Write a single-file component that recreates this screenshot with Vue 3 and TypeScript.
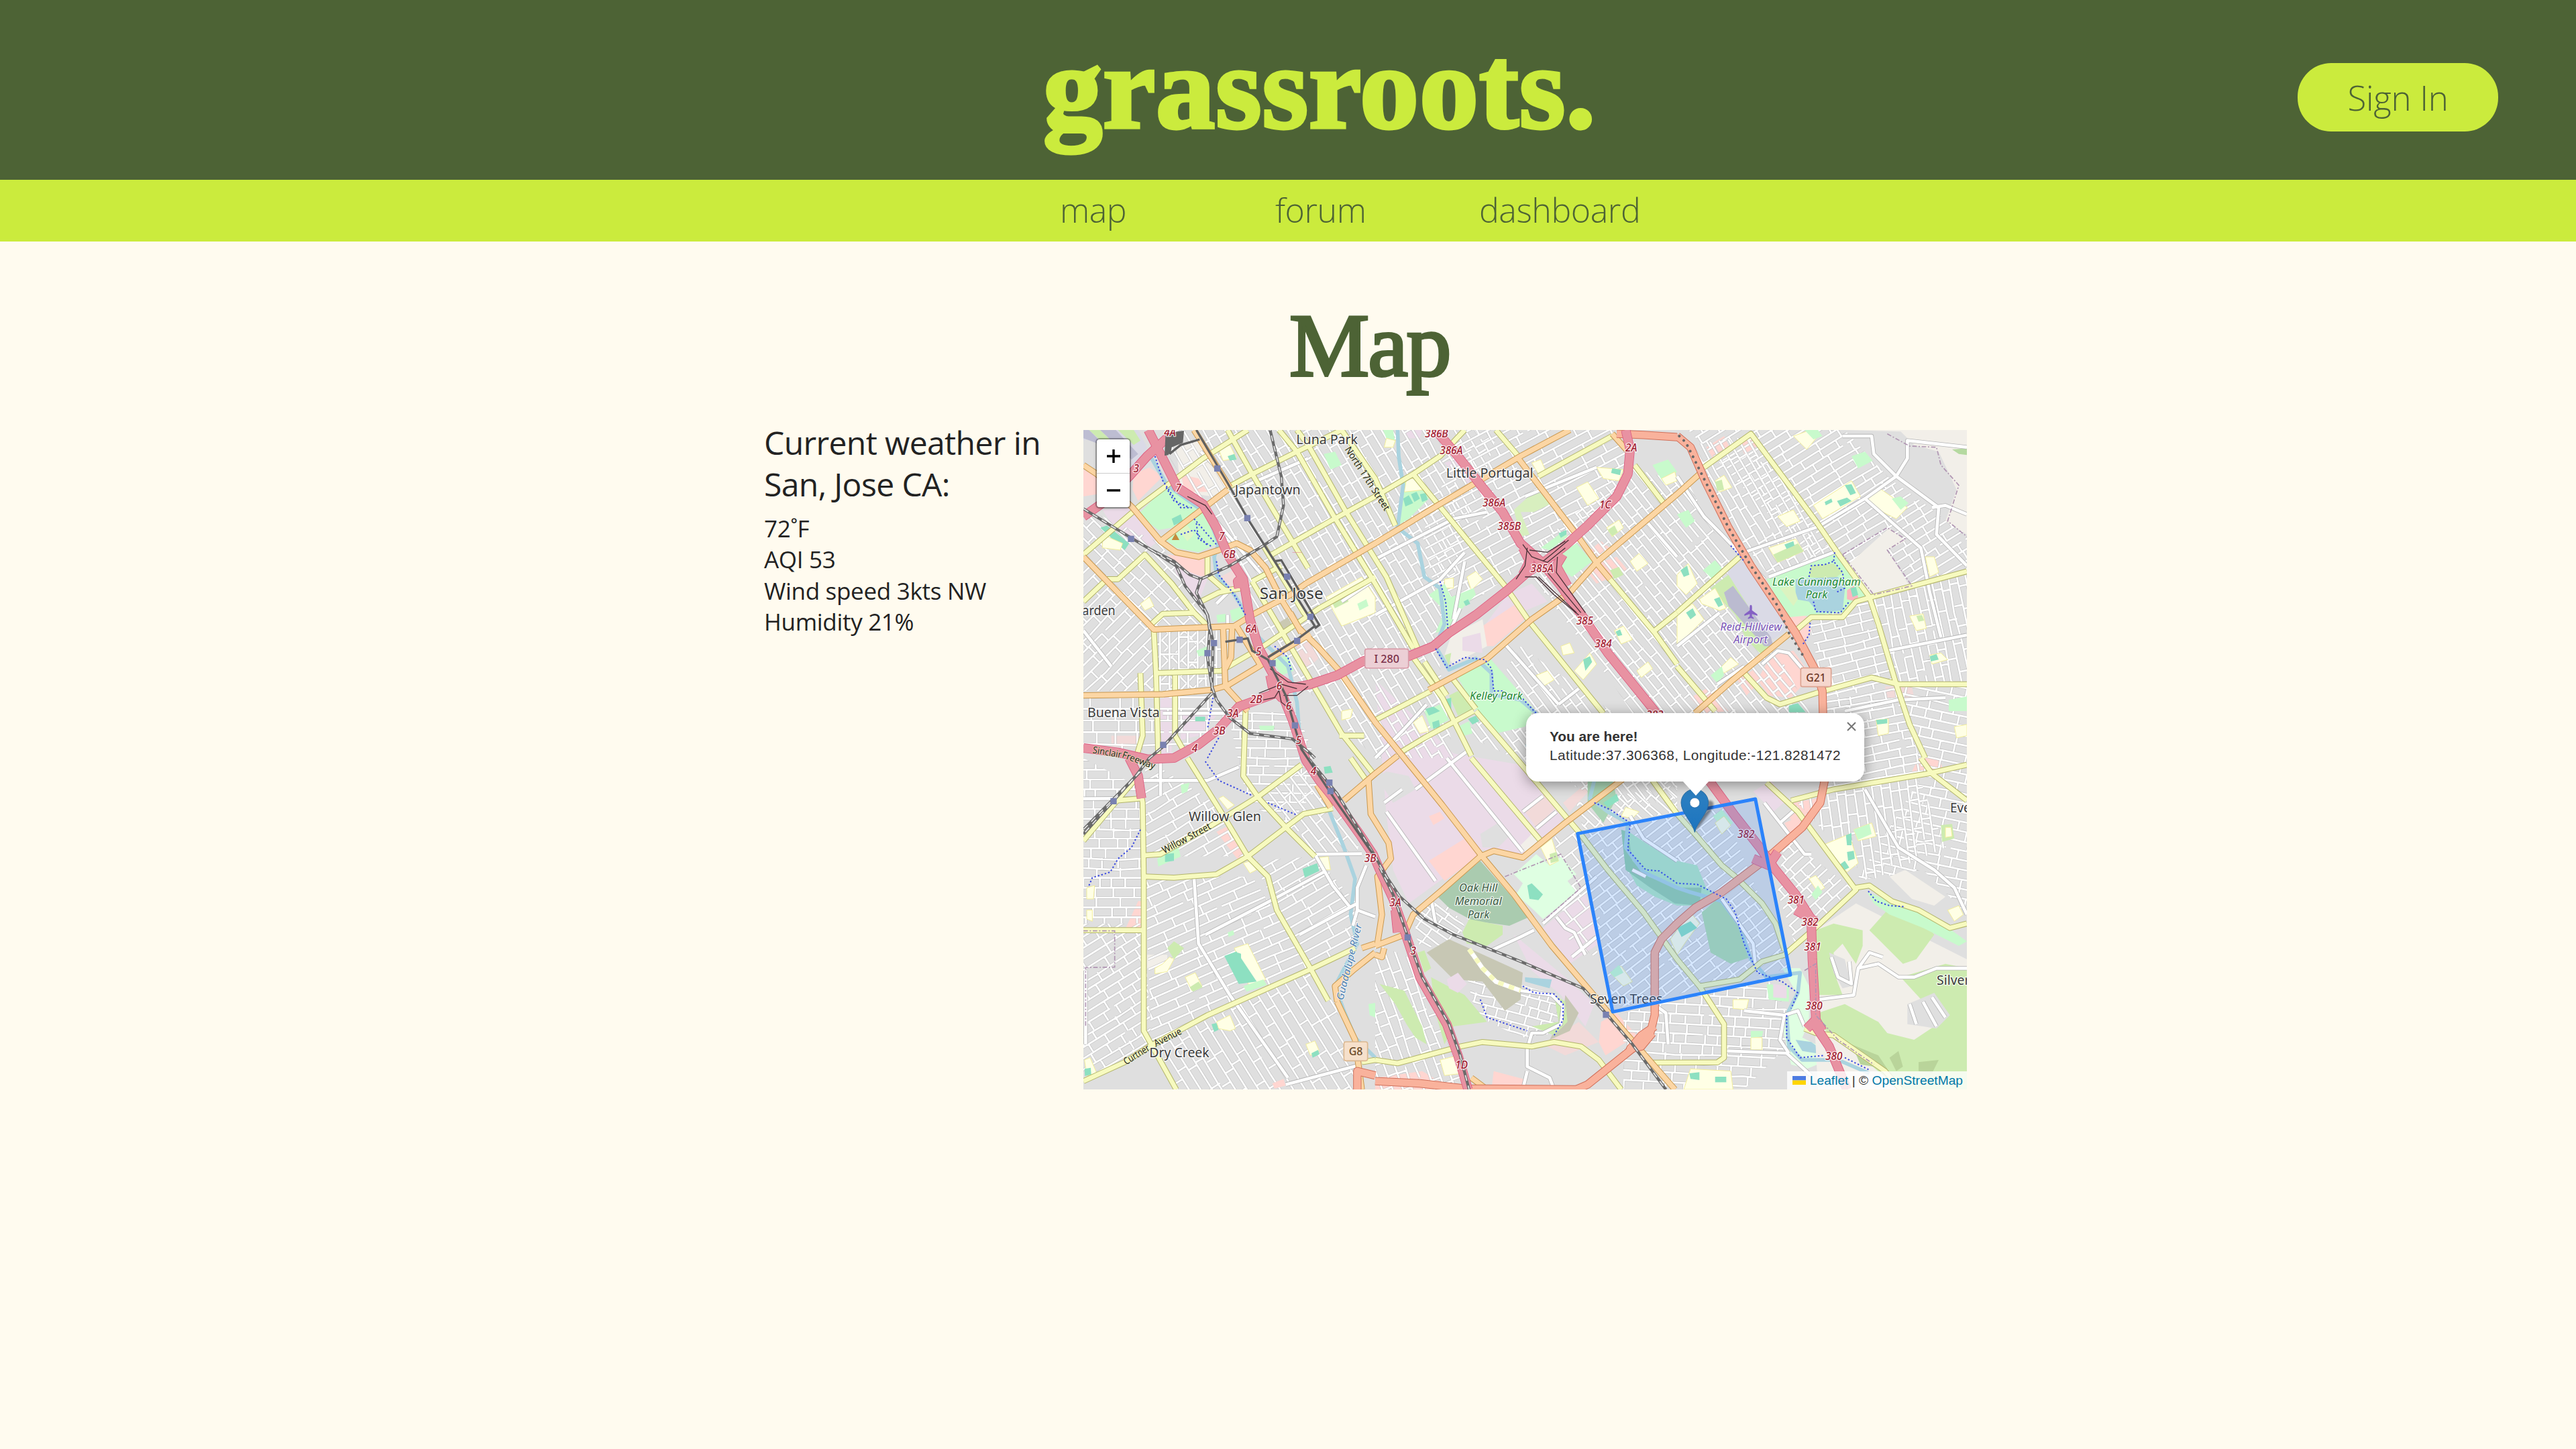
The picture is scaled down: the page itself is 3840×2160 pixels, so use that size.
<script setup lang="ts">
type Pt = [number, number]
interface Zone { pts: string; angle: number; gap: number; block: number }
interface Shape { c: string; p: string }
interface Label { t: string; x: number; y: number; w: number; s?: number; k?: string; r?: number }

const navItems = ['map', 'forum', 'dashboard']
const weather = ['72˚F', 'AQI 53', 'Wind speed 3kts NW', 'Humidity 21%']

// Residential street zones, generated as jittered grids
const zones: Zone[] = [
  { pts: '420,33 1900,33 1760,500 1620,960 1700,1500 1350,1500 900,1050 700,560 430,160', angle: 59, gap: 40, block: 105 },
  { pts: '1750,33 2500,33 2480,250 2200,560 2040,620 1650,900 1560,500', angle: -28, gap: 42, block: 120 },
  { pts: '45,600 360,930 600,920 600,1200 45,1200', angle: -45, gap: 42, block: 120 },
  { pts: '45,380 390,540 600,900 360,910 45,590', angle: 45, gap: 44, block: 90 },
  { pts: '370,930 690,930 690,1170 370,1200', angle: 90, gap: 42, block: 110 },
  { pts: '45,1220 620,1220 700,1300 500,1480 45,1450', angle: 0, gap: 52, block: 90 },
  { pts: '690,1300 1000,1290 1120,1600 960,1800 780,1700', angle: 1, gap: 40, block: 95 },
  { pts: '45,1500 315,1640 315,2240 45,2240', angle: 0, gap: 44, block: 72 },
  { pts: '45,2240 315,2240 350,2780 45,2940', angle: -32, gap: 42, block: 90 },
  { pts: '320,1500 660,1720 780,1940 320,1940', angle: -30, gap: 42, block: 130 },
  { pts: '320,2030 800,2030 1060,2440 350,2790', angle: -24, gap: 42, block: 130 },
  { pts: '800,1960 1080,1940 1270,2150 1270,2350 1060,2440', angle: -30, gap: 42, block: 130 },
  { pts: '350,2790 1060,2450 1170,2600 1290,2982 460,2982', angle: 58, gap: 44, block: 140 },
  { pts: '820,1670 1040,1530 1280,1850 1270,1930 1080,1930', angle: 52, gap: 40, block: 120 },
  { pts: '1350,2330 1520,2400 1640,2640 1760,2982 1350,2982', angle: 70, gap: 44, block: 90 },
  { pts: '1520,2180 1650,2120 1750,2250 1680,2380 1540,2330', angle: 35, gap: 34, block: 80 },
  { pts: '1750,2440 2160,2560 2170,2730 2000,2750 1800,2650', angle: 15, gap: 42, block: 60 },
  { pts: '2480,200 2750,270 3400,1500 2600,1450 2400,1150 2000,620', angle: 51, gap: 36, block: 110 },
  { pts: '1760,1400 2000,1000 2560,1400 2700,1500 2700,1700 2400,1700', angle: 53, gap: 36, block: 120 },
  { pts: '2750,33 3450,33 3650,250 3996,500 3996,660 3570,780 3440,640 3330,640', angle: -32, gap: 38, block: 110 },
  { pts: '2760,100 3030,60 3440,640 3100,670 2950,480', angle: 60, gap: 38, block: 100 },
  { pts: '3290,880 3570,790 3680,1170 3360,1240', angle: -14, gap: 40, block: 85 },
  { pts: '3570,780 3996,680 3996,1170 3690,1170', angle: 78, gap: 38, block: 95 },
  { pts: '3360,1240 3690,1180 3800,1560 3330,1650', angle: -10, gap: 38, block: 80 },
  { pts: '3700,1180 3996,1180 3996,2200 3800,2000 3500,2050 3800,1570', angle: 12, gap: 42, block: 85 },
  { pts: '3230,1690 3780,1580 3900,1900 3560,2050', angle: 82, gap: 40, block: 95 },
  { pts: '3180,1850 3480,2080 3230,2340 3150,2100', angle: -42, gap: 38, block: 80 },
  { pts: '2260,1840 2900,1710 3200,2440 2420,2620', angle: -38, gap: 38, block: 100 },
  { pts: '2460,2640 3100,2480 3200,2640 3200,2780 3000,2982 2460,2982', angle: 3, gap: 44, block: 72 },
  { pts: '2250,1700 2700,1620 2700,1740 2280,1820', angle: 42, gap: 34, block: 85 },
  { pts: '2150,1820 2250,1820 2300,2100 2350,2400 2200,2300', angle: -38, gap: 60, block: 110 },
]

function streets(z: Zone, seed: number): string {
  let s = seed * 7919 + 13
  const rnd = () => { s = (s * 1103515245 + 12345) % 2147483648; return s / 2147483648 }
  const pts = z.pts.split(' ').map(p => p.split(',').map(Number) as Pt)
  const a = (z.angle * Math.PI) / 180
  const ca = Math.cos(a), sa = Math.sin(a)
  const loc = pts.map(([x, y]) => [x * ca + y * sa, -x * sa + y * ca] as Pt)
  const u0 = Math.min(...loc.map(p => p[0])), u1 = Math.max(...loc.map(p => p[0]))
  const v0 = Math.min(...loc.map(p => p[1])), v1 = Math.max(...loc.map(p => p[1]))
  const P = (u: number, v: number) => `${Math.round(u * ca - v * sa)} ${Math.round(u * sa + v * ca)}`
  let d = ''
  for (let v = v0 + 8; v < v1; v += z.gap) {
    let u = u0
    while (u < u1) {
      const len = z.block * (2 + Math.floor(rnd() * 5))
      const bend = rnd() < 0.25 ? 8 : 0
      d += `M${P(u, v)}L${P(u + len * 0.55, v + bend)}L${P(u + len, v)}`
      u += len + (rnd() < 0.35 ? 22 : 0)
    }
    for (let w = u0 + rnd() * z.block; w < u1; w += z.block * (0.6 + rnd() * 0.9)) {
      d += `M${P(w, v)}L${P(w, v + z.gap)}`
    }
  }
  return d
}
const zonePaths = zones.map((z, i) => streets(z, i + 1))

const IND = '#ebdbe8', RET = '#ffd6d1', COM = '#f2dad9', PARK = '#c8facc', GRASS = '#cdebb0'
const SCH = '#ffffe5', PITCH = '#8de0c1', BARE = '#f2efe9', WATER = '#aad3df'

const under: Shape[] = [
  { c: '#dadae6', p: '45,33 290,33 330,110 260,230 110,60 45,80' },
  { c: GRASS, p: '70,33 120,33 240,150 220,170' },
  { c: GRASS, p: '200,33 270,33 300,80 270,100' },
  { c: '#bdbdd2', p: '45,33 70,33 230,190 100,90 45,70' },
  { c: '#bdbdd2', p: '120,33 190,33 290,140 260,165' },
  { c: RET, p: '45,210 105,240 105,320 45,330' },
  { c: RET, p: '270,230 340,200 400,240 290,350 265,300' },
  { c: IND, p: '130,390 250,380 380,530 340,560 180,470' },
  { c: RET, p: '420,590 600,610 600,690 520,680' },
  { c: IND, p: '450,640 600,700 560,800 470,700' },
  { c: BARE, p: '460,100 570,70 690,290 620,330 480,310' },
  { c: RET, p: '480,230 560,250 600,310 500,310' },
  { c: COM, p: '640,700 750,640 790,720 720,740' },
  { c: COM, p: '990,980 1060,950 1110,1040 1040,1110' },
  { c: IND, p: '390,1210 440,1210 440,1500 390,1500' },
  { c: IND, p: '480,1300 640,1310 560,1400 480,1420' },
  { c: COM, p: '170,1400 300,1400 300,1450 170,1450' },
  { c: IND, p: '1480,33 1560,33 1550,70 1500,70' },
  { c: IND, p: '1660,180 1720,160 1800,290 1750,270' },
  { c: IND, p: '1940,770 2050,720 2120,800 2000,850 1830,920' },
  { c: RET, p: '1830,910 1980,810 2030,870 1880,1000 1830,1000' },
  { c: BARE, p: '1690,950 1830,880 1850,1000 1700,1080 1660,1040' },
  { c: IND, p: '1740,960 1820,940 1830,1030 1740,1020' },
  { c: RET, p: '2310,570 2360,530 2400,560 2350,600' },
  { c: RET, p: '2370,620 2430,600 2480,660 2340,720 2300,670' },
  { c: IND, p: '1350,1150 1700,1480 2000,1530 2080,1600 2200,1750 2120,1880 1990,1940 1830,1910 1500,2150 1430,2000 1400,1750' },
  { c: '#dfdfdf', p: '1400,1560 1500,1580 1530,1640 1430,1700 1360,1590' },
  { c: '#dfdfdf', p: '1820,1840 1900,1790 1960,1840 1900,1900 1830,1900' },
  { c: RET, p: '1590,1960 1750,1860 1810,1940 1660,2050' },
  { c: RET, p: '1590,1760 1640,1740 1660,1770 1610,1800' },
  { c: COM, p: '2020,1740 2110,1660 2160,1720 2070,1810' },
  { c: COM, p: '2190,1700 2320,1590 2340,1610 2220,1740' },
  { c: BARE, p: '2000,1890 2050,1840 2100,1870 2020,1920' },
  { c: IND, p: '2100,2260 2290,2100 2350,2330 2220,2420' },
  { c: IND, p: '1970,2290 2200,2480 2330,2600 2290,2700 2180,2560 2050,2450' },
  { c: RET, p: '2360,2680 2430,2640 2520,2740 2380,2830 2350,2770' },
  { c: COM, p: '2100,2780 2260,2680 2350,2770 2200,2830' },
  { c: RET, p: '1350,2930 1560,2900 1700,2982 1350,2982' },
  { c: RET, p: '1880,2900 2030,2940 2000,2982 1870,2982' },
  { c: RET, p: '3220,1700 3330,1680 3300,1770 3240,1830 3200,1760' },
  { c: RET, p: '3180,1790 3230,1770 3260,1820 3210,1850' },
  { c: IND, p: '3040,1650 3120,1600 3190,1690 3130,1740' },
  { c: RET, p: '3780,1500 3870,1500 3890,1550 3750,1560' },
  { c: RET, p: '3060,1150 3120,1040 3220,1020 3300,1130 3210,1230 3110,1220' },
  { c: RET, p: '2830,110 2910,60 2940,120 2860,160' },
  { c: RET, p: '2980,90 3040,60 3070,100 3000,140' },
  { c: RET, p: '3200,860 3270,850 3300,930 3260,1000 3230,930' },
  { c: RET, p: '2760,1230 2830,1190 2930,1290 2820,1300' },
  { c: RET, p: '2970,1150 3050,1100 3080,1150 3010,1220' },
  { c: COM, p: '3630,1180 3750,1180 3760,1230 3640,1230' },
  { c: RET, p: '290,2140 310,2140 310,2270 230,2270' },
  { c: RET, p: '640,1830 700,1800 790,1930 740,1960' },
  { c: BARE, p: '330,2380 420,2380 420,2420 330,2440' },
]

const over: Shape[] = [
  { c: PARK, p: '360,160 400,240 450,300 620,400 650,540 560,580 460,560 410,520 500,430 440,470 380,480 290,410 420,280 370,200' },
  { c: '#dff6c4', p: '470,480 510,460 540,500 510,530' },
  { c: PITCH, p: '440,430 480,410 490,440 450,460' },
  { c: PITCH, p: '120,470 150,460 250,540 230,570' },
  { c: SCH, p: '130,500 220,540 210,570 130,560' },
  { c: SCH, p: '650,120 700,100 730,160 670,170' },
  { c: PITCH, p: '690,150 720,140 730,165 700,170' },
  { c: PARK, p: '1120,140 1170,130 1200,190 1150,210' },
  { c: SCH, p: '1130,780 1290,690 1350,780 1350,850 1200,910' },
  { c: GRASS, p: '1150,790 1220,760 1230,800 1170,830' },
  { c: PARK, p: '1270,810 1310,790 1320,820 1280,840' },
  { c: '#cac9b2', p: '910,900 960,870 975,900 930,930' },
  { c: PARK, p: '700,840 760,820 770,870 710,890' },
  { c: PARK, p: '640,860 680,855 685,890 645,895' },
  { c: PARK, p: '890,1060 960,1040 985,1110 930,1130' },
  { c: SCH, p: '300,810 340,780 360,820 320,840' },
  { c: PITCH, p: '545,1315 590,1315 590,1335 545,1335' },
  { c: PARK, p: '830,1355 900,1355 895,1378 835,1375' },
  { c: PARK, p: '550,1020 600,1000 600,1040 560,1045' },
  { c: SCH, p: '1200,1290 1250,1280 1240,1320 1200,1330' },
  { c: PARK, p: '1480,260 1570,290 1590,340 1500,430 1450,460' },
  { c: SCH, p: '1490,250 1540,250 1570,300 1480,310' },
  { c: PITCH, p: '1475,340 1500,325 1520,360 1485,375' },
  { c: PITCH, p: '1510,320 1535,310 1550,340 1525,355' },
  { c: PITCH, p: '1550,320 1575,315 1585,345 1560,355' },
  { c: PARK, p: '1385,33 1430,33 1440,90 1400,70' },
  { c: SCH, p: '1400,70 1440,80 1430,110 1390,110' },
  { c: '#d8efbf', p: '1970,390 2070,300 2140,360 2060,400 2000,400 2040,500 2000,510' },
  { c: PARK, p: '2090,560 2200,480 2210,510 2130,570' },
  { c: PITCH, p: '2170,495 2205,480 2205,500 2180,515' },
  { c: PARK, p: '2180,580 2250,540 2320,620 2230,690 2170,650' },
  { c: SCH, p: '2050,180 2090,165 2110,210 2080,230' },
  { c: SCH, p: '2250,290 2300,265 2350,340 2300,370' },
  { c: SCH, p: '2340,200 2460,210 2440,260 2370,250' },
  { c: PITCH, p: '2410,205 2450,210 2445,235 2405,225' },
  { c: PARK, p: '2590,190 2660,165 2700,220 2640,270' },
  { c: SCH, p: '2630,250 2690,220 2700,260 2650,280' },
  { c: SCH, p: '2385,470 2440,435 2460,470 2410,510' },
  { c: GRASS, p: '2390,480 2420,460 2435,490 2410,508' },
  { c: SCH, p: '2490,620 2530,585 2570,630 2520,665' },
  { c: GRASS, p: '2400,660 2440,645 2460,680 2420,700' },
  { c: SCH, p: '1760,690 1800,665 1830,700 1780,750' },
  { c: SCH, p: '1660,700 1700,695 1700,740 1660,740' },
  { c: PARK, p: '1590,770 1660,720 1690,780 1790,740 1800,770 1740,830 1700,920 1620,940 1660,840' },
  { c: PITCH, p: '1745,800 1765,790 1775,810 1755,820' },
  { c: GRASS, p: '1660,1040 1690,1030 1680,1090' },
  { c: SCH, p: '2420,930 2460,910 2500,970 2450,990' },
  { c: PITCH, p: '2425,935 2445,925 2455,950 2435,955' },
  { c: SCH, p: '2180,1000 2220,985 2240,1030 2190,1040' },
  { c: SCH, p: '2240,1110 2310,1030 2340,1080 2280,1150' },
  { c: PITCH, p: '2280,1060 2310,1045 2320,1070 2290,1110' },
  { c: SCH, p: '2070,1130 2120,1110 2150,1150 2100,1180' },
  { c: SCH, p: '2520,1110 2570,1070 2590,1100 2540,1140' },
  { c: PARK, p: '1720,1140 1860,1050 2060,1280 2020,1360 1890,1390 1800,1280' },
  { c: GRASS, p: '1680,1220 1720,1200 1790,1280 1720,1310' },
  { c: PITCH, p: '1655,1240 1690,1230 1690,1290 1665,1290' },
  { c: PARK, p: '1570,1290 1640,1260 1680,1330 1600,1370' },
  { c: PITCH, p: '1575,1280 1610,1270 1640,1290 1590,1310' },
  { c: PITCH, p: '1605,1340 1635,1330 1640,1360 1610,1370' },
  { c: PITCH, p: '1765,1325 1800,1310 1815,1335 1785,1350' },
  { c: PARK, p: '1720,1360 1770,1335 1785,1390 1750,1400' },
  { c: SCH, p: '1520,1340 1560,1310 1590,1380 1550,1390' },
  { c: '#aacbaf', p: '1630,2120 1820,1960 2040,2210 1950,2250 1880,2240 1790,2230 1680,2170' },
  { c: GRASS, p: '1770,2220 1920,2250 1920,2290 1850,2340 1760,2330 1740,2280' },
  { c: '#c7c7b4', p: '1580,2370 1680,2310 2010,2460 2000,2580 1930,2630 1830,2500 1700,2490' },
  { c: '#c7c7b4', p: '2200,2560 2260,2640 2220,2720 2130,2760 2190,2650' },
  { c: '#dfffe2', p: '1970,2020 2070,1930 2130,1980 2180,1940 2250,2020 2210,2050 2250,2100 2100,2220 2060,2180 1980,2110 2010,2060' },
  { c: PITCH, p: '2030,2070 2050,2060 2100,2110 2080,2135 2040,2130' },
  { c: SCH, p: '2090,1900 2140,1860 2170,1960 2130,1980' },
  { c: GRASS, p: '2130,1930 2160,1920 2170,1960 2135,1970' },
  { c: GRASS, p: '1370,2510 1480,2540 1560,2700 1580,2780 1530,2750 1490,2690 1440,2600' },
  { c: GRASS, p: '1600,2480 1750,2560 1850,2680 1700,2700 1660,2780 1620,2640' },
  { c: IND, p: '1670,2490 1720,2460 1760,2510 1720,2550 1680,2530' },
  { c: GRASS, p: '1540,2370 1570,2360 1600,2440 1570,2460' },
  { c: WATER, p: '2020,2480 2140,2490 2130,2530 2020,2500' },
  { c: GRASS, p: '2150,2560 2200,2590 2210,2680 2150,2740 2050,2700 2170,2680' },
  { c: SCH, p: '1640,2850 1720,2830 1740,2910 1660,2920' },
  { c: '#a9d4b4', p: '2300,1600 2410,1590 2430,1680 2370,1790 2300,1700' },
  { c: SCH, p: '2470,1720 2530,1740 2500,1770 2450,1760' },
  { c: PITCH, p: '2370,1700 2430,1660 2440,1690 2390,1720' },
  { c: '#b5e8c4', p: '2470,1820 2560,1880 2640,1930 2700,1960 2790,1980 2830,2080 2880,2120 2800,2160 2700,2160 2600,2120 2520,2070 2470,1980' },
  { c: '#96cdaa', p: '2450,1820 2480,1830 2500,1960 2570,2030 2700,2080 2810,2080 2800,2160 2690,2150 2580,2080 2470,2000' },
  { c: '#b2dcae', p: '2810,2190 2880,2130 2970,2220 3030,2390 2940,2420 2850,2370' },
  { c: PARK, p: '2860,1760 2900,1730 2950,1790 2910,1820' },
  { c: SCH, p: '2870,1790 2910,1760 2940,1800 2900,1840' },
  { c: SCH, p: '2670,2310 2760,2190 2800,2240 2740,2320 2700,2380' },
  { c: PITCH, p: '2700,2260 2760,2230 2790,2260 2720,2300' },
  { c: SCH, p: '2400,2460 2450,2430 2500,2500 2460,2520' },
  { c: PARK, p: '2400,2460 2440,2425 2460,2460 2420,2480' },
  { c: '#dfffe2', p: '3170,2440 3250,2440 3290,2520 3290,2680 3260,2750 3360,2800 3380,2850 3280,2890 3210,2870 3170,2700 3240,2560' },
  { c: PARK, p: '3100,2510 3200,2520 3200,2590 3110,2580' },
  { c: IND, p: '3130,2510 3190,2520 3190,2575 3130,2570' },
  { c: WATER, p: '3230,2760 3300,2770 3340,2800 3320,2820 3260,2810' },
  { c: SCH, p: '2950,2580 3020,2580 3010,2625 2950,2620' },
  { c: SCH, p: '3030,2750 3080,2750 3080,2805 3030,2805' },
  { c: PARK, p: '3030,2720 3085,2720 3080,2745 3030,2750' },
  { c: SCH, p: '2760,2890 2940,2900 2950,2982 2730,2982' },
  { c: PITCH, p: '2755,2910 2800,2905 2800,2940 2760,2935' },
  { c: PITCH, p: '2870,2925 2920,2925 2920,2950 2870,2950' },
  { c: PARK, p: '2840,700 3100,1000' },
  { c: BARE, p: '3460,640 3650,470 3720,530 3640,570 3740,730 3570,770' },
  { c: BARE, p: '3450,33 3996,33 3996,500 3900,440 3950,300 3870,130 3760,100 3700,40' },
  { c: '#b5d9a0', p: '3930,120 3996,115 3996,145 3960,140' },
  { c: PARK, p: '3100,700 3410,580 3550,780 3440,850 3200,870 3170,830' },
  { c: GRASS, p: '3300,640 3400,630 3440,670 3400,700 3290,690' },
  { c: WATER, p: '3230,700 3420,690 3450,750 3440,840 3330,850 3290,800 3230,790' },
  { c: '#dcf3c0', p: '3160,740 3220,730 3240,790 3220,820' },
  { c: '#fbb6bf', p: '3460,750 3490,730 3510,780 3500,800 3460,790' },
  { c: PITCH, p: '3475,740 3500,735 3510,770 3485,780' },
  { c: '#dadae6', p: '2920,660 2990,620 3080,700 3170,880 3200,920 3130,970 3000,850' },
  { c: GRASS, p: '2850,740 2930,680 3130,1000 3080,1040 3010,970 2960,860' },
  { c: '#bbbbd0', p: '2910,760 2950,730 3120,960 3130,1000 3090,1000 2930,820' },
  { c: SCH, p: '2800,790 2870,740 2920,830 2890,840 2810,810' },
  { c: PITCH, p: '2865,790 2890,780 2905,815 2885,825' },
  { c: SCH, p: '2700,680 2750,630 2790,720 2740,770 2700,730' },
  { c: PITCH, p: '2715,660 2745,640 2755,680 2730,690' },
  { c: PARK, p: '2815,660 2870,615 2900,650 2860,700' },
  { c: SCH, p: '2700,860 2770,810 2820,880 2740,960 2700,990' },
  { c: PITCH, p: '2740,850 2770,830 2785,860 2760,880' },
  { c: PARK, p: '2700,410 2750,390 2780,440 2740,470' },
  { c: SCH, p: '2870,260 2910,235 2945,290 2890,310' },
  { c: GRASS, p: '2870,265 2900,255 2910,300 2880,305' },
  { c: SCH, p: '3220,60 3290,35 3330,60 3280,120' },
  { c: PARK, p: '3270,33 3330,33 3350,60 3310,75' },
  { c: SCH, p: '3150,420 3220,390 3250,440 3190,465' },
  { c: PARK, p: '3480,150 3540,130 3575,170 3510,205' },
  { c: SCH, p: '3310,370 3480,260 3520,330 3350,430' },
  { c: PITCH, p: '3450,280 3480,275 3500,315 3475,325' },
  { c: PITCH, p: '3415,350 3460,335 3480,350 3430,375' },
  { c: PITCH, p: '3360,355 3390,340 3395,355 3365,370' },
  { c: SCH, p: '3540,340 3600,290 3730,380 3680,430 3620,400' },
  { c: PARK, p: '3660,340 3700,330 3735,360 3700,390' },
  { c: SCH, p: '3110,560 3230,520 3265,575 3150,625' },
  { c: GRASS, p: '3130,590 3240,540 3265,575 3150,625' },
  { c: PITCH, p: '3180,545 3220,530 3225,550 3190,565' },
  { c: SCH, p: '3740,865 3800,855 3815,920 3770,930' },
  { c: GRASS, p: '3770,865 3795,860 3805,885 3780,890' },
  { c: SCH, p: '3810,600 3850,600 3870,670 3830,690' },
  { c: SCH, p: '3830,1040 3880,1030 3910,1060 3840,1080' },
  { c: PITCH, p: '3830,1045 3860,1035 3870,1060 3835,1068' },
  { c: PARK, p: '3915,1240 3996,1225 3996,1290 3915,1290' },
  { c: SCH, p: '3590,1330 3645,1325 3645,1390 3600,1400' },
  { c: PITCH, p: '3590,1330 3640,1325 3640,1345 3595,1350' },
  { c: SCH, p: '3940,1360 3996,1350 3996,1400 3950,1410' },
  { c: SCH, p: '2890,1100 2940,1050 2975,1080 2910,1120' },
  { c: PARK, p: '2850,1130 2900,1090 2910,1130 2880,1165' },
  { c: PITCH, p: '3200,1265 3240,1255 3275,1295 3200,1295' },
  { c: SCH, p: '3350,1890 3470,1840 3510,1970 3460,2010' },
  { c: PITCH, p: '3455,1845 3480,1835 3480,1890 3460,1890' },
  { c: PITCH, p: '3460,1920 3490,1915 3495,1950 3465,1960' },
  { c: PITCH, p: '3430,1975 3450,1960 3470,1990 3450,2000' },
  { c: SCH, p: '3490,1820 3570,1790 3590,1850 3510,1870' },
  { c: PARK, p: '3490,1820 3560,1795 3570,1840 3510,1865' },
  { c: SCH, p: '3290,2040 3320,2025 3360,2080 3330,2100' },
  { c: PARK, p: '3300,2110 3330,2070 3350,2100 3320,2135' },
  { c: GRASS, p: '3880,1800 3930,1795 3940,1860 3885,1875' },
  { c: SCH, p: '3900,1810 3925,1810 3930,1850 3900,1855' },
  { c: BARE, p: '3650,2030 3720,2000 3900,2120 3850,2160 3750,2130' },
  { c: BARE, p: '3320,2270 3500,2150 3996,2400 3996,2600 3980,2982 3330,2982 3310,2600' },
  { c: GRASS, p: '3320,2270 3400,2240 3530,2270 3530,2340 3500,2420 3440,2330 3400,2370 3410,2480 3440,2560 3330,2560' },
  { c: GRASS, p: '3560,2270 3640,2180 3800,2230 3850,2290 3770,2400 3710,2420' },
  { c: GRASS, p: '3330,2640 3450,2600 3600,2680 3640,2730 3760,2760 3850,2700 3810,2600 3700,2480 3900,2420 3996,2440 3996,2982 3700,2982 3450,2780 3340,2700' },
  { c: '#dfdfdf', p: '3780,2580 3850,2550 3920,2650 3860,2710 3800,2700 3730,2690 3730,2600' },
  { c: '#dfdfdf', p: '3380,2370 3450,2400 3480,2520 3440,2530 3400,2460' },
  { c: PARK, p: '3550,2100 3680,2150 3800,2180 3900,2250 3996,2320 3960,2340 3800,2260 3650,2200 3580,2150' },
  { c: SCH, p: '3910,2180 3960,2160 3980,2200 3940,2230' },
  { c: '#b9d49a', p: '3480,2780 3600,2830 3640,2890 3520,2870' },
  { c: '#b9d49a', p: '3650,2840 3690,2810 3710,2880 3680,2900' },
  { c: '#b9d49a', p: '3780,2860 3870,2850 3840,2910 3780,2900' },
  { c: PARK, p: '480,1620 520,1610 510,1650 485,1660' },
  { c: SCH, p: '650,1680 670,1670 720,1710 690,1730' },
  { c: PARK, p: '375,1950 470,1900 480,1940 380,1985' },
  { c: PITCH, p: '410,1930 450,1925 450,1960 410,1965' },
  { c: SCH, p: '760,1970 790,1960 820,2000 790,2015' },
  { c: PITCH, p: '1025,1995 1090,1970 1100,2005 1035,2035' },
  { c: SCH, p: '1100,1945 1140,1940 1150,2000 1110,2000' },
  { c: SCH, p: '60,2080 95,2070 90,2130 60,2130' },
  { c: SCH, p: '60,2180 85,2180 85,2230 60,2220' },
  { c: SCH, p: '720,2350 780,2330 860,2490 790,2530' },
  { c: PITCH, p: '675,2385 730,2365 820,2500 740,2510' },
  { c: PITCH, p: '735,2370 750,2375 750,2400 738,2400' },
  { c: PARK, p: '760,2520 850,2490 865,2515 775,2545' },
  { c: SCH, p: '500,2480 545,2460 575,2520 530,2540' },
  { c: GRASS, p: '520,2525 560,2500 578,2525 535,2545' },
  { c: SCH, p: '400,2420 430,2390 450,2400 420,2455 365,2465 365,2440' },
  { c: GRASS, p: '420,2350 450,2320 495,2350 450,2400' },
  { c: PARK, p: '690,2280 715,2270 720,2290 695,2300' },
  { c: SCH, p: '640,2680 700,2650 725,2710 700,2720 650,2710' },
  { c: PITCH, p: '618,2690 640,2685 650,2715 630,2725' },
  { c: SCH, p: '1040,2780 1080,2765 1100,2810 1060,2830' },
  { c: PITCH, p: '1065,2820 1095,2805 1100,2825 1070,2840' },
  { c: SCH, p: '50,2850 75,2840 105,2910 60,2920' },
  { c: PITCH, p: '50,2890 78,2885 80,2915 52,2922' },
  { c: PARK, p: '1320,2600 1350,2595 1350,2660 1325,2650' },
  { c: RET, p: '890,2955 940,2935 950,2965 900,2978' },
  { c: PITCH, p: '1120,1540 1150,1535 1160,1565 1125,1570' },
]

const rivers = [
  'M1450 33L1455 150L1475 280L1450 470L1540 540L1570 690L1640 740L1660 900L1620 1000L1680 1105L1800 1055L1870 1120L1870 1215L2000 1240L2070 1300L2030 1450',
  'M2330 1600L2310 1680L2390 1740L2480 1790L2470 1900L2550 2010L2700 2080L2760 2100L2900 2140L2980 2250L3030 2400L3100 2480L3250 2460L3240 2550L3190 2650L3200 2790L3260 2850L3340 2850L3420 2850L3560 2910',
  'M350 160L420 280L530 360L600 410L650 540L630 600L640 680L720 770L770 850L830 960L960 1090L1000 1250L1020 1500L1080 1580L1130 1700L1210 1900L1260 2040L1240 2200L1270 2330L1170 2520L1210 2630L1260 2750L1350 2840',
]
const trails = [
  'M365 150L400 260L480 380L530 380', 'M415 290L450 350L520 380', 'M540 430L600 500L640 545', 'M550 450L560 520L620 555', 'M480 500L540 480L600 550',
  'M640 620L650 680L720 770L770 860', 'M900 1000L960 1050L975 1110', 'M625 1230L600 1370', 'M650 1410L600 1500',
  'M1640 710L1665 800L1675 920', 'M1620 1010L1670 1095L1750 1050L1840 1060L1870 1100L1880 1200L1920 1200', 'M2010 1235L2070 1300',
  'M2330 1700L2400 1730L2490 1790L2480 1910L2560 2000L2620 2005L2700 2060L2790 2065L2920 2130L2960 2190L3000 2330L3060 2460L3170 2500L3240 2550L3210 2620',
  'M590 1515L650 1600L800 1668', 'M870 1700L1000 1755', 'M300 1820L260 1900L200 1950L165 2010L85 2035L70 2070',
  'M3290 690L3300 640L3360 635L3400 620L3440 670L3450 740L3410 760', 'M3310 800L3320 845L3430 850L3470 800', 'M3405 580L3400 620', 'M3295 895L3290 950L3260 995',
  'M3190 2650L3190 2750L3250 2840L3360 2830', 'M3450 2840L3560 2895', 'M1820 2580L1850 2660L2030 2720', 'M2010 2520L2060 2550L2150 2555L2190 2600L2190 2670L2150 2740',
  'M3555 2095L3590 2140L3650 2160L3720 2165', 'M2940 550L3000 620',
]
const whites = [
  'M1350 1500L1470 1380L1580 1260', 'M1670 1500L2010 1920', 'M1400 1740L1620 2050', 'M1530 1640L1760 1470', 'M1390 1700L1470 1640', 'M2010 1740L2100 1670', 'M2070 1815L2160 1740',
  'M45 1682L305 1680', 'M300 1600L600 1600L740 1540', 'M390 1500L390 1670', 'M540 2040L560 2330L700 2560L960 2930', 'M590 2290L860 2150L1120 2010', 'M1080 1930L1290 1928', 'M1080 1930L1160 2070L1240 2170',
  'M1310 1980L1270 2080L1270 2180L1250 2250', 'M1010 2290L1270 2150', 'M1270 2180L1350 2210', 'M950 2960L1290 2870', 'M55 2450L55 2780',
  'M1350 610L1700 430L1850 400', 'M1350 860L1640 700L1750 580', 'M1730 830L1690 920', 'M1750 620L1700 880', 'M1930 990L2170 1260', 'M2170 1260L2260 1190',
  'M2020 330L2340 200', 'M2570 450L2700 600', 'M2700 240L2820 420L2900 500L3090 700', 'M3000 580L3330 465', 'M3110 690L3400 580', 'M3330 465L3540 340L3680 240', 'M3540 340L3790 560L3830 760L3880 960',
  'M3440 60L3570 60L3580 140L3680 240L3870 380L3860 500L3996 640', 'M3680 240L3730 160L3730 80L3996 110', 'M3840 380L3900 370L3996 410', 'M3640 1020L3996 950', 'M2700 1000L2890 850', 'M2880 1170L3000 1090', 'M3080 1080L3150 1020L3200 1030L3260 1100',
  'M3450 1290L3690 1240L3900 1230', 'M3540 1640L3690 1900L3850 2000L3940 2080L3996 2200', 'M3996 2440L3860 2440L3760 2480L3690 2480L3600 2420L3510 2440L3490 2560L3330 2580', 'M3510 2440L3560 2370L3620 2390', 'M3390 2390L3420 2480L3480 2510L3470 2410',
  'M3090 1700L3270 1930L3300 1930', 'M3160 1790L3240 1720', 'M2540 2560L2650 2640L2660 2780', 'M2500 2000L2560 2030', 'M2490 1760L2550 1860L2700 1960', 'M2900 2130L3040 2330L3050 2420',
  'M2000 2540L2140 2560L2190 2610L2180 2690L2100 2730L2050 2730L2030 2800L2030 2880L2130 2930L2150 2982', 'M2030 2900L2010 2982', 'M2100 2240L2340 2030', 'M2230 2390L2340 2300', 'M2160 2210L2200 2260L2240 2280L2290 2380',
  'M1600 2130L1620 2240L1730 2300', 'M1870 2360L2000 2300L2060 2270', 'M3000 2630L3180 2650L3240 2630L3270 2700', 'M3180 2650L3160 2760L3200 2820', 'M2920 2810L3190 2820L3300 2920', 'M400 1300L780 1300', 'M690 930L690 860', 'M1350 700L1200 800', 'M700 750L640 810',
  'M630 430L860 700', 'M730 300L1050 160', 'M570 130L640 200', 'M45 930L170 1090', 'M3740 2600L3770 2690', 'M3800 2590L3860 2700', 'M3840 2570L3900 2660',
]
const yellows = [
  'M45 590L300 370L580 160L780 33', 'M45 800L150 700L200 700L320 590L440 720L540 850L610 920', 'M540 850L400 855L350 900', 'M360 930L370 1120L380 1500', 'M370 1120L660 1110L850 1000L1100 830L1350 690',
  'M690 33L800 230L900 400L1050 650', 'M690 290L800 230L1000 130L1200 33', 'M920 33L1000 130L1160 410L1350 720L1520 1010', 'M1000 33L1050 100L1220 400L1400 690L1540 1010', 'M870 600L1150 440L1350 330L1520 230L1640 150L1750 33',
  'M850 550L1030 850L1040 860', 'M800 710L1000 1050L1200 1390L1350 1580', 'M800 710L930 640', 'M600 600L600 680L680 750L750 740', 'M570 800L650 760L750 740', 'M770 1290L760 1580L830 1680L950 1810L1080 1940', 'M1200 33L1350 250L1440 460',
  'M300 1120L310 1400L280 1500', 'M455 1130L455 1400L490 1460', 'M45 1870L170 1720L290 1580L310 1700L315 2030L315 2720L460 2982', 'M190 1690L310 1680', 'M510 1500L660 1740L780 1940L870 2030L910 2180L1060 2440L1140 2585', 'M320 1935L390 1930L620 1800L830 1670L1020 1530',
  'M320 2030L450 2035L640 2020L780 1940L950 1810L1030 1750L1160 1725', 'M45 2270L315 2270', 'M45 2945L230 2860L340 2790L600 2650L1060 2445L1260 2350', 'M1240 1500L1310 1600', 'M1190 1400L1300 1400', 'M1290 2860L1350 2850',
  'M1780 1500L2090 1870', 'M1800 1290L1980 1500L2260 1830L2390 2000L2550 2190L2700 2400L2800 2520L2910 2690L2910 2840L2880 2861L2580 2862',
  'M2800 2520L2980 2490L3080 2410L3180 2380L3340 2240L3500 2090L3240 1740L3100 1610', 'M2590 1600L2700 1750L2780 1840L2900 1980L2960 2030L3080 2150L3140 2240L3180 2360', 'M3210 1690L3400 1640L3820 1570L3996 1530', 'M3790 1500L3840 1570L3996 1690',
  'M3500 2080L3560 2070L3660 2140L3780 2180L3920 2260L3996 2240', 'M3270 2710L3320 2730L3400 2740L3630 2900L3700 2982', 'M1350 2850L1450 2865L1730 2790L1830 2770L2050 2790L2150 2770L2270 2790L2350 2850L2450 2982',
  'M2820 200L3030 50L3320 440L3430 600L3560 780L3600 900L3680 1170L3740 1350L3810 1500', 'M2700 850L2980 600', 'M3230 930L3300 870L3440 870L3500 800L3570 780L3996 665', 'M2700 1090L2870 1290', 'M3000 1120L3100 1230L3160 1260L3320 1210L3570 1140L3690 1170L3996 1170',
  'M1890 33L1990 150', 'M1520 230L1930 730L2040 890L2370 1300', 'M2080 240L2410 60', 'M2400 700L2600 940L2700 1080', 'M2600 930L2700 850', 'M1350 1330L1600 1200', 'M1470 1470L1570 1410L1790 1290', 'M1700 1150L1800 1280', 'M1520 1050L1650 1230L1780 1490', 'M1570 1070L1670 1220', 'M2510 190L2640 360',
]
const oranges = [
  'M45 600L360 925L610 915L720 910L800 860L970 770L1040 720L1350 540L1630 370L2000 150L2220 33', 'M45 1220L400 1215L620 1195L690 1175L830 1090L900 1040L1060 945', 'M45 190L105 230L265 380L390 530L460 580L560 600L650 570L730 540L790 570L860 650L930 790L1010 920L1100 1010L1190 1110L1350 1340L1480 1500L1650 1710L1820 1930L1970 2110L2140 2340L2310 2540L2470 2730L2690 2982',
  'M390 530L520 430L690 300', 'M540 33L700 290', 'M670 920L680 1180L780 1290', 'M710 920L705 1050L680 1100', 'M730 910L840 1090', 'M970 850L1020 940', 'M1590 1195L1850 1055L2050 880L2220 760L2340 625L2700 320L2800 230', 'M1990 160L2250 500L2350 640L2400 700', 'M2410 50L2490 140',
  'M2780 1300L2950 1150L3200 945', 'M1210 1690L1350 1570L1450 1490', 'M1320 1600L1330 1750L1410 1880L1420 1950L1360 2030L1380 2200L1360 2330', 'M1350 2340L1480 2290L1520 2200L1650 2090L1820 1940L1880 1915L2010 1945L2200 1790L2450 1600L2550 1500', 'M1180 2590L1260 2760L1290 2982', 'M1180 2590L1170 2520L1250 2450L1350 2370', 'M1290 2350L1350 2330', 'M1090 1620L1150 1720', 'M1780 2930L1850 2982', 'M1350 2380L1380 2390L1390 2350',
]
const reds = [
  'M2700 60L2760 110L2830 270L2930 470L3030 640L3130 790L3230 940L3320 1110L3350 1200L3355 1400L3360 1600L3340 1700L3260 1810L3100 1950L2900 2100L2780 2170L2700 2240L2630 2310L2600 2370L2600 2650L2580 2730L2500 2800L2300 2960L2250 2982',
  'M1350 2945L1550 2955L1750 2978L2250 2982', 'M2430 50L2550 55L2700 65', 'M1350 2920L1270 2900L1270 2982', 'M2600 2700L2540 2740L2490 2800L2540 2790L2590 2730',
]
const motorways = [
  'M335 33L400 160L465 290L580 365L640 470L690 590L760 700L790 880L830 1010L890 1120L940 1230L980 1330L1020 1450L1040 1510L1100 1600L1180 1700L1280 1840L1340 1930L1370 2000L1430 2130L1480 2270L1520 2390L1550 2480L1670 2690L1720 2830L1765 2982',
  'M45 1455L200 1475L330 1505L450 1500L560 1440L650 1370L740 1270L880 1220L960 1190L1060 1170L1180 1130L1300 1065L1500 1045L1610 1000L1680 940L1800 860L1940 750L2030 670L2110 620L2200 550L2300 460L2430 330L2480 230L2490 120L2470 33',
  'M45 420L130 360L250 240L330 150L440 50', 'M1620 33L1720 150L1830 290L1920 400L2000 540L2090 620L2180 730L2280 870L2390 1030L2600 1290L2700 1420L2850 1610L2960 1760L3070 1900L3140 2000L3230 2110L3300 2220L3305 2400L3320 2650L3320 2700L3380 2790L3460 2982',
  'M250 1500L290 1580L305 1680', 'M760 690L735 710L740 740', 'M880 1130L890 1180L930 1230L960 1170L900 1130', 'M1000 580L1000 581', 'M2010 560L2040 620L2010 680', 'M2190 590L2160 640L2210 730', 'M3040 1950L3110 1980L3150 1920', 'M3230 2180L3320 2230', 'M1440 2180L1450 2280', 'M3280 2710L3320 2670L3350 2720',
]
const ramps = [
  'M2010 545L2050 600L2120 625L2200 560', 'M2040 570L2120 580L2200 530', 'M2030 560L2020 640L1980 700', 'M2165 600L2160 670L2290 850', 'M2080 690L2250 850', 'M2100 620L2150 580L2215 525', 'M2020 690L2070 690L2150 770L2260 860', 'M2120 670L2270 850',
  'M880 1100L960 1160L1040 1170', 'M830 1210L930 1170L1000 1190', 'M850 1240L900 1230L930 1180', 'M920 1200L930 1250L980 1290', 'M940 1220L1000 1220L1050 1180', 'M510 330L590 370L620 410',
]
const rails = [
  'M45 385L200 480L350 570L450 620L520 680L570 700L700 640L850 550L910 510L940 370L930 240L880 33', 'M350 570L460 640L500 730L600 860L610 930L600 1050L620 1180L640 1240L700 1320L790 1390L980 1415L1060 1480L1080 1500', 'M570 700L550 760L600 860L625 980L620 1200', 'M620 1210L400 1450L340 1500L280 1580L45 1840', 'M300 1560L45 1820',
  'M1050 1500L1180 1660L1350 1940L1400 2030L1460 2120L1570 2220L1700 2290L2000 2410L2280 2530L2380 2640L2500 2780L2650 2982', 'M1370 1990L1430 2110L1520 2370L1560 2480L1680 2690L1730 2830L1770 2982',
]
const trams = [
  'M550 33L690 270L780 430L900 620L1080 910L1000 970L870 1050', 'M900 620L930 615L1100 905L1080 920', 'M680 980L780 965L800 1020L870 1060L950 1220L990 1360L1020 1460L1060 1520L1180 1700L1340 1930', 'M430 140L480 100L565 75', 'M440 70L430 140', 'M460 50L490 60',
]
const stations: Pt[] = [[644, 205], [778, 427], [956, 689], [1060, 868], [1001, 976], [891, 1076], [744, 971], [629, 986], [600, 1031], [258, 520], [402, 1441], [991, 1354], [180, 1693], [1145, 1610], [1150, 1648], [1495, 2302], [2382, 2648]]
const boundaries = ['M3440 590L3640 470L3720 520L3640 570L3750 730L3580 770L3440 590', 'M3640 50L3740 105L3860 110L3880 190L3960 280L3910 440L3996 510', 'M45 2273L185 2273L185 2435L55 2437L55 2700', 'M1930 2030L2180 1930L2270 2080L2100 2230', 'M3270 2450L3320 2420L3320 2650L3420 2760L3580 2870']

const labels: Label[] = [
  { t: 'San Jose', x: 833, y: 790, w: 285, s: 73 }, { t: 'Japantown', x: 722, y: 321, w: 294 }, { t: 'Luna Park', x: 997, y: 96, w: 275 }, { t: 'arden', x: 40, y: 860, w: 148 }, { t: 'Buena Vista', x: 63, y: 1317, w: 323 },
  { t: 'Little Portugal', x: 1667, y: 247, w: 390 }, { t: 'Willow Glen', x: 516, y: 1781, w: 324 }, { t: 'Dry Creek', x: 340, y: 2837, w: 268 }, { t: 'Seven Trees', x: 2310, y: 2597, w: 325 }, { t: 'Evergreen', x: 3921, y: 1742, w: 270 }, { t: 'Silver Creek', x: 3861, y: 2514, w: 320 },
  { t: 'Kelley Park', x: 1773, y: 1238, w: 236, s: 50, k: 'park' }, { t: 'Lake Cunningham', x: 3126, y: 728, w: 395, s: 50, k: 'park' }, { t: 'Park', x: 3275, y: 787, w: 98, s: 50, k: 'park' },
  { t: 'Reid-Hillview', x: 2893, y: 929, w: 275, s: 48, k: 'air' }, { t: 'Airport', x: 2953, y: 988, w: 152, s: 48, k: 'air' },
  { t: 'Oak Hill', x: 1725, y: 2098, w: 172, s: 48, k: 'cem' }, { t: 'Memorial', x: 1706, y: 2157, w: 210, s: 48, k: 'cem' }, { t: 'Park', x: 1763, y: 2216, w: 98, s: 48, k: 'cem' },
  { t: 'Willow Street', x: 407, y: 1928, w: 240, s: 44, k: 'road', r: -28 }, { t: 'Curtner', x: 236, y: 2873, w: 128, s: 44, k: 'road', r: -32 }, { t: 'Avenue', x: 370, y: 2792, w: 132, s: 44, k: 'road', r: -27 },
  { t: 'North 17th Street', x: 1213, y: 120, w: 330, s: 44, k: 'road', r: 57 }, { t: 'Sinclair', x: 85, y: 1477, w: 130, s: 42, k: 'road', r: 10 }, { t: 'Freeway', x: 215, y: 1497, w: 155, s: 42, k: 'road', r: 20 }, { t: 'Guadalupe River', x: 1206, y: 2585, w: 350, s: 44, k: 'water', r: -76 },
]
const exits: [string, number, number][] = [
  ['4A', 432, 60], ['3', 281, 222], ['7', 470, 310], ['7', 664, 524], ['6B', 698, 607], ['6A', 795, 938], ['5', 829, 1042], ['6', 921, 1193], ['6', 963, 1285], ['2B', 818, 1253], ['3A', 713, 1318], ['3B', 653, 1396], ['4', 543, 1474], ['5', 1008, 1437],
  ['386B', 1624, 67], ['386A', 1690, 141], ['386A', 1881, 374], ['385B', 1949, 480], ['385A', 2096, 669], ['385', 2287, 903], ['384', 2370, 1006], ['383', 2600, 1322], ['2A', 2495, 129], ['1C', 2378, 384],
  ['4', 1074, 1575], ['3B', 1328, 1964], ['3A', 1440, 2164], ['3', 1520, 2380], ['1D', 1736, 2888], ['382', 3008, 1857], ['381', 3232, 2150], ['382', 3294, 2249], ['381', 3306, 2361], ['380', 3312, 2626], ['380', 3401, 2849],
]
const shields = [
  { t: 'I 280', x: 1304, y: 1012, w: 195, h: 86, bg: '#eccfd5', bd: '#d79ba8', fg: '#7a3049', tw: 112 },
  { t: 'G21', x: 3253, y: 1097, w: 136, h: 84, bg: '#f6d6cd', bd: '#dda492', fg: '#6e3626', tw: 88 },
  { t: 'G8', x: 1210, y: 2769, w: 106, h: 85, bg: '#f6e0cb', bd: '#dcb890', fg: '#6a4a28', tw: 62 },
]
const roadLayers = [
  { list: whites, casing: '#b4b4b4', fill: '#ffffff', cw: 19, fw: 14 },
  { list: yellows, casing: '#b3b56b', fill: '#f7fabf', cw: 26, fw: 20 },
  { list: oranges, casing: '#c9984f', fill: '#fcd6a4', cw: 28, fw: 22 },
  { list: reds, casing: '#d0705a', fill: '#f9b29c', cw: 37, fw: 31 },
  { list: motorways, casing: '#dc5c80', fill: '#e892a2', cw: 42, fw: 37 },
]
</script>

<template>
  <div class="page">
    <header class="top">
      <div class="logo">grassroots.</div>
      <button class="signin">Sign In</button>
    </header>
    <nav class="nav">
      <a v-for="n in navItems" :key="n" :class="n">{{ n }}</a>
    </nav>
    <main>
      <h1>Map</h1>
      <div class="content">
        <section class="weather">
          <h2>Current weather in<br />San, Jose CA:</h2>
          <p v-for="w in weather" :key="w">{{ w }}</p>
        </section>
        <section class="map">
          <svg class="tiles" viewBox="45 33 3951 2949" preserveAspectRatio="none">
            <defs>
              <clipPath v-for="(z, i) in zones" :id="'z' + i" :key="i"><polygon :points="z.pts" /></clipPath>
              <linearGradient id="pin" x1="0" y1="0" x2="0" y2="1">
                <stop offset="0" stop-color="#2e80c1" /><stop offset="1" stop-color="#1b74bf" />
              </linearGradient>
              <filter id="soft" x="-50%" y="-50%" width="200%" height="200%"><feGaussianBlur stdDeviation="5" /></filter>
            </defs>
            <rect x="0" y="0" width="4100" height="3100" fill="#dfdfdf" />
            <polygon v-for="(s, i) in under" :key="'u' + i" :points="s.p" :fill="s.c" />
            <g v-for="(d, i) in zonePaths" :key="'s' + i" :clip-path="`url(#z${i})`" fill="none" stroke-linejoin="round">
              <path :d="d" stroke="#c2c2c2" stroke-width="12" />
              <path :d="d" stroke="#ffffff" stroke-width="8" />
            </g>
            <polygon v-for="(s, i) in over" :key="'o' + i" :points="s.p" :fill="s.c" :stroke="s.c === SCH ? '#f3ee9c' : 'none'" stroke-width="3" />
            <g fill="none" stroke="#aad3df" stroke-width="17" stroke-linejoin="round">
              <path v-for="(d, i) in rivers" :key="i" :d="d" />
            </g>
            <g fill="none" stroke-linejoin="round">
              <g v-for="(l, k) in roadLayers" :key="k">
                <path v-for="(d, i) in l.list" :key="'c' + i" :d="d" :stroke="l.casing" :stroke-width="l.cw" />
                <path v-for="(d, i) in l.list" :key="'f' + i" :d="d" :stroke="l.fill" :stroke-width="l.fw" />
              </g>
            </g>
            <g fill="none" stroke="#4a3238" stroke-width="4">
              <path v-for="(d, i) in ramps" :key="i" :d="d" />
            </g>
            <g fill="none" stroke="#6a6a6a" stroke-width="13">
              <path v-for="(d, i) in rails" :key="i" :d="d" />
            </g>
            <g fill="none" stroke="#e8e8e8" stroke-width="5" stroke-dasharray="26 22">
              <path v-for="(d, i) in rails" :key="i" :d="d" />
            </g>
            <g fill="none" stroke="#606060" stroke-width="10">
              <path v-for="(d, i) in trams" :key="i" :d="d" />
            </g>
            <path d="M412 60L430 45L495 36L490 90L440 110L425 145L408 148Z" fill="#666" />
            <path d="M1770 2355L1830 2440L1890 2500L2000 2540" fill="none" stroke="#ffffff" stroke-width="20" />
            <path d="M1770 2355L1830 2440L1890 2500L2000 2540" fill="none" stroke="#f7fabf" stroke-width="20" stroke-dasharray="25 25" />
            <path d="M2710 60L2740 90L2830 270L2930 470L3030 640L3150 820L3200 940L3265 1045" fill="none" stroke="#686868" stroke-width="12" stroke-linecap="round" stroke-dasharray="0.1 28" />
            <g fill="none" stroke="#3a49e0" stroke-width="6" stroke-dasharray="7 9">
              <path v-for="(d, i) in trails" :key="i" :d="d" />
            </g>
            <g fill="none" stroke="#b095b2" stroke-width="5" stroke-dasharray="20 8 6 8">
              <path v-for="(d, i) in boundaries" :key="i" :d="d" />
            </g>
            <rect v-for="(p, i) in stations" :key="i" :x="p[0] - 14" :y="p[1] - 14" width="28" height="28" fill="#7981b0" />
            <path d="M457 495L474 525L440 525Z" fill="#c58a3c" />
            <path d="M3030 815q5 0 5 10v14l24 18v7l-24-8v10l8 7v5l-13-4-13 4v-5l8-7v-10l-24 8v-7l24-18v-14q0-10 5-10z" fill="#8461c4" />
            <g class="labels">
              <text v-for="(l, i) in labels" :key="i" :x="l.x" :y="l.y" :class="l.k" :font-size="l.s || 58" :textLength="l.w" lengthAdjust="spacingAndGlyphs" :transform="l.r ? `rotate(${l.r} ${l.x} ${l.y})` : undefined">{{ l.t }}</text>
              <text v-for="(e, i) in exits" :key="'e' + i" :x="e[1]" :y="e[2]" class="exit">{{ e[0] }}</text>
            </g>
            <g v-for="s in shields" :key="s.t">
              <rect :x="s.x" :y="s.y" :width="s.w" :height="s.h" rx="9" :fill="s.bg" :stroke="s.bd" stroke-width="5" />
              <text class="shield" :x="s.x + s.w / 2" :y="s.y + 61" :fill="s.fg" :textLength="s.tw" lengthAdjust="spacingAndGlyphs">{{ s.t }}</text>
            </g>
            <polygon points="2255,1838 3050,1683 3207,2470 2412,2635" fill="#3388ff" fill-opacity="0.2" stroke="#2b83fb" stroke-width="15" stroke-linejoin="round" />
            <path d="M2782 1830L2850 1740Q2880 1690 2840 1690Q2810 1700 2800 1750Z" fill="#000" opacity="0.4" filter="url(#soft)" />
            <path d="M2779 1832C2771 1790 2718 1745 2718 1700A61 61 0 0 1 2840 1700C2840 1745 2787 1790 2779 1832Z" fill="url(#pin)" stroke="#2a6da3" stroke-width="3" />
            <circle cx="2779" cy="1700" r="22" fill="#fff" stroke="#2768a0" stroke-width="2" />
          </svg>
          <div class="zoom">
            <span><svg viewBox="0 0 20 20"><path d="M10 0v20M0 10h20" stroke="#000" stroke-width="3.4" /></svg></span>
            <span><svg viewBox="0 0 20 20"><path d="M0 10h20" stroke="#000" stroke-width="3.4" /></svg></span>
          </div>
          <div class="popup">
            <b>You are here!</b>
            <span>Latitude:37.306368, Longitude:-121.8281472</span>
            <svg class="close" viewBox="0 0 14 14"><path d="M1 1L13 13M13 1L1 13" stroke="#757575" stroke-width="2" /></svg>
            <svg class="tip" viewBox="0 0 40 22"><path d="M0 0H40L20 22Z" fill="#fff" /></svg>
          </div>
          <div class="credit">
            <svg class="flag" viewBox="0 0 20 13"><path fill="#4c7be1" d="M0 0h20v6.5H0z" /><path fill="#ffd500" d="M0 6.5h20V13H0z" /></svg>
            <span><a>Leaflet</a> | © <a>OpenStreetMap</a></span>
          </div>
        </section>
      </div>
    </main>
  </div>
</template>

<style>
body { background: #fffbef; }
</style>

<style scoped>
.page { width: 3840px; height: 2160px; overflow: hidden; background: #fffbef; font-family: "Open Sans", "Noto Sans", sans-serif; color: #222; }
.top { display: flex; justify-content: space-between; align-items: flex-start; box-sizing: border-box; height: 268px; padding: 43px 116px 0 1555px; background: #4d6335; }
.logo { font: bold 176px/1 "Liberation Serif", serif; color: #cbeb3d; -webkit-text-stroke: 5px #cbeb3d; letter-spacing: 1px; }
.signin { margin-top: 51px; width: 299px; height: 102px; border: 0; padding: 0; border-radius: 50px; background: #cbeb3d; color: #4d6335; font: 300 51px/98px "Open Sans", sans-serif; letter-spacing: -0.3px; }
.nav { display: flex; height: 92px; padding-left: 1580px; background: #cbeb3d; color: #4d6335; font-size: 50px; font-weight: 300; line-height: 90px; letter-spacing: -0.4px; }
.map-link { width: 320px; }
.nav a { flex: none; }
.nav .map { width: 321px; height: auto; }
.nav .forum { width: 304px; }
h1 { box-sizing: border-box; height: 281px; margin: 0; padding: 88px 0 0 1922px; font: 134px/1 "Liberation Serif", serif; color: #4d6335; -webkit-text-stroke: 4px #4d6335; letter-spacing: -2px; }
.content { display: flex; align-items: flex-start; padding-left: 1139px; }
.weather { width: 476px; margin-top: -12px; font-weight: 400; }
h2 { margin: 0 0 12px; font-size: 48px; font-weight: 400; line-height: 62px; letter-spacing: -0.6px; white-space: nowrap; }
.weather p { margin: 0; font-size: 35px; line-height: 46.4px; letter-spacing: -0.3px; }
.content .map { position: relative; width: 1317px; height: 983px; overflow: hidden; }
.tiles { display: block; width: 1317px; height: 983px; }
.labels text { font-family: "Noto Sans", sans-serif; fill: #3a3a3a; stroke: #ffffff; stroke-opacity: 0.75; stroke-width: 8px; paint-order: stroke; stroke-linejoin: round; }
.labels .park { fill: #1f8a35; font-style: italic; }
.labels .air { fill: #7a55b8; font-style: italic; }
.labels .cem { fill: #3d5c45; font-style: italic; }
.labels .water { fill: #4d80b3; font-style: italic; stroke-width: 5px; }
.labels .road { fill: #222; stroke: #f7fabf; stroke-width: 4px; }
.labels .exit { fill: #a0192e; font-size: 46px; font-style: italic; font-weight: 500; text-anchor: middle; }
.shield { font: 500 48px "Noto Sans", sans-serif; text-anchor: middle; }
.zoom { position: absolute; left: 20px; top: 14px; width: 49px; border-radius: 4px; background: #fff; box-shadow: 0 0 0 2px rgba(0, 0, 0, 0.25), 0 1px 5px rgba(0, 0, 0, 0.35); }
.zoom span { display: flex; align-items: center; justify-content: center; height: 50px; }
.zoom span + span { border-top: 1px solid #ccc; }
.zoom svg { width: 20px; height: 20px; }
.popup { position: absolute; left: 660px; top: 422px; box-sizing: border-box; width: 504px; height: 102px; padding: 21px 0 0 35px; border-radius: 18px; background: #fff; color: #333; font: 20.8px/28px "Liberation Sans", sans-serif; box-shadow: 0 4px 20px rgba(0, 0, 0, 0.4); }
.popup b, .popup span { display: block; white-space: nowrap; }
.popup span { letter-spacing: 0.45px; }
.close { position: absolute; right: 12px; top: 13px; width: 14px; height: 14px; }
.tip { position: absolute; left: 233px; top: 101px; width: 40px; height: 22px; }
.credit { position: absolute; right: 0; bottom: 0; display: flex; align-items: center; gap: 6px; height: 27px; padding: 0 6px 0 8px; background: rgba(255, 255, 255, 0.8); color: #333; font: 19.2px/27px "Liberation Sans", sans-serif; white-space: nowrap; }
.credit a { color: #0078a8; }
.flag { width: 20px; height: 13px; }
</style>
